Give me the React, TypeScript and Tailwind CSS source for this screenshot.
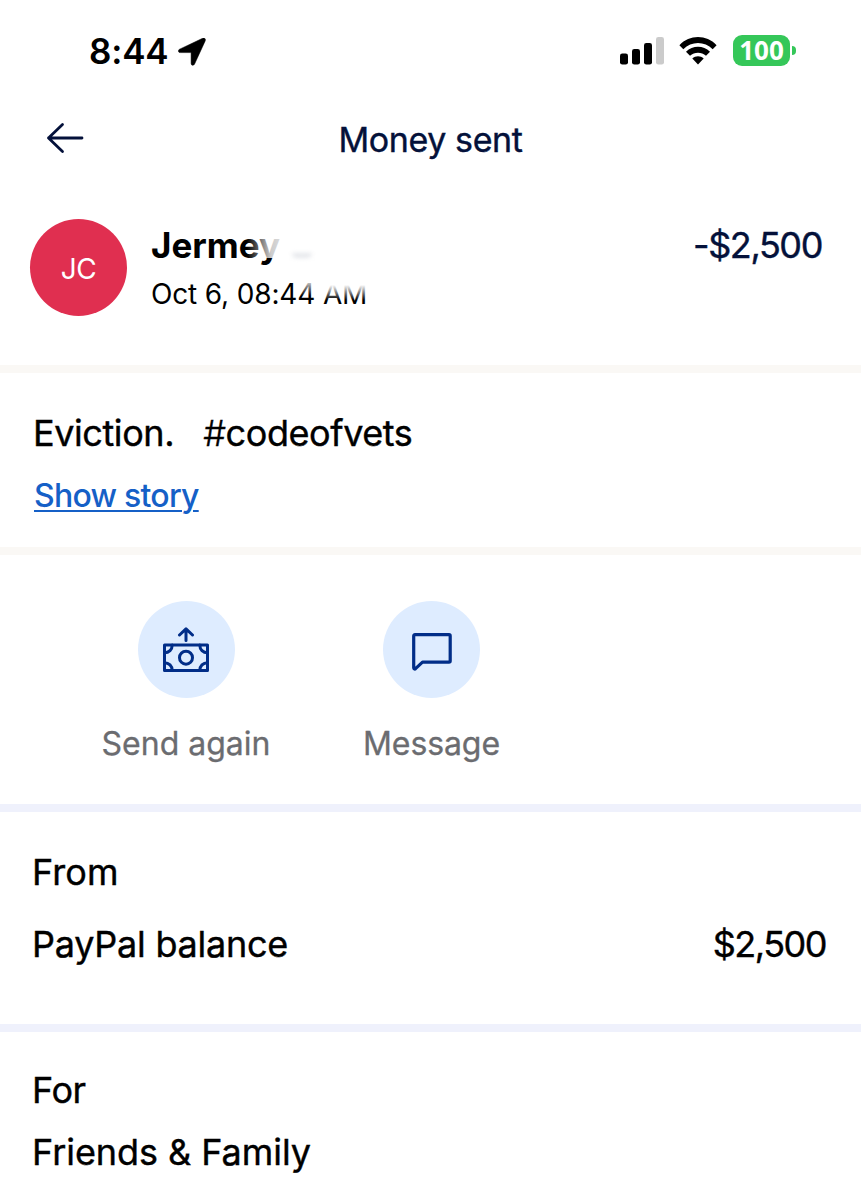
const ArrowLeft = () => (
    <svg width="38" height="32" viewBox="0 0 38 32" fill="none" stroke="#04113a" strokeWidth="2.8" strokeLinecap="round" strokeLinejoin="round">
      <path d="M16.5 2.5L2.5 16L16.5 29.5M2.5 16H36"/>
    </svg>
)

const LocationArrow = () => (
    <svg width="28" height="28" viewBox="0 0 28 28">
      <path d="M1.6 11.2L24.6 .3C26.6-.5 28 1 27.2 2.9L16.5 26.2C15.7 27.9 13.1 27.6 13.1 25.4V14.6H2.3C.1 14.6-.3 12 1.6 11.2Z" stroke="#000" strokeWidth=".5"/>
    </svg>
)

const Signal = () => (
    <svg width="44" height="28" viewBox="0 0 44 28">
      <rect x="0" y="16.5" width="8" height="11" rx="2.3"/>
      <rect x="12" y="12" width="8" height="15.5" rx="2.3"/>
      <rect x="24" y="6" width="8" height="21.5" rx="2.3"/>
      <rect x="36" y="0" width="8" height="27.5" rx="2.3" fill="#cbcbcb"/>
    </svg>
)

const Wifi = () => (
    <svg width="38" height="28" viewBox="0 0 38 28">
      <path d="M.4 8.2C10.6-2.7 27.4-2.7 37.6 8.2L33.7 12.2C25.6 3.9 12.4 3.9 4.3 12.2Z"/>
      <path d="M7 14.8C13.6 8.1 24.4 8.1 31 14.8L27 18.8C22.6 14.6 15.4 14.6 11 18.8Z"/>
      <path d="M13.3 21.5C16.5 18.6 21.5 18.6 24.7 21.5L19 27.5Z"/>
    </svg>
)

const SendAgain = () => (
    <svg width="46" height="46" viewBox="0 0 46 46" fill="none" stroke="#012d88" strokeWidth="3" strokeLinecap="round" strokeLinejoin="round">
      <path d="M23 13.5V2M16.5 8L23 1.8L29.5 8"/>
      <rect x="1.5" y="18" width="43" height="25.5"/>
      <circle cx="23" cy="30.7" r="6.5"/>
      <path d="M9.2 18C9.2 22.5 6 25.8 1.4 25.8M36.8 18C36.8 22.5 40 25.8 44.6 25.8M9.2 43.5C9.2 39 6 35.7 1.4 35.7M36.8 43.5C36.8 39 40 35.7 44.6 35.7"/>
    </svg>
)

const MessageBubble = () => (
    <svg width="40" height="38" viewBox="0 0 40 38" fill="none" stroke="#012d88" strokeWidth="3.2" strokeLinecap="round" strokeLinejoin="round">
      <path d="M3 1.7H37C37.7 1.7 38.2 2.2 38.2 2.9V28C38.2 28.7 37.7 29.2 37 29.2H10.5L3.5 35.7C2.7 36.4 1.7 35.8 1.7 34.8V2.9C1.7 2.2 2.3 1.7 3 1.7Z"/>
    </svg>
)

const App = () => {
  return (
      <div className="w-[861px] h-[1200px] overflow-hidden bg-white text-black font-['Inter',sans-serif] leading-[40px]">
        <div className="h-[102px] flex items-start justify-between pl-[89px] pr-[65px]">
          <div className="flex items-start">
            <span className="w-[89px] mt-[31px] text-[35px] font-semibold tracking-[-0.2px]">8:44</span>
            <div className="mt-[38px]"><LocationArrow/></div>
          </div>
          <div className="flex items-start">
            <div className="mt-[37px] mr-[15px]"><Signal/></div>
            <div className="mt-[37px] mr-[16px]"><Wifi/></div>
            <div className="mt-[35px] flex items-center">
              <div className="w-[57px] h-[31px] rounded-[9px] bg-[#35c759] text-white text-center text-[26px] leading-[31px] font-bold font-['Open_Sans',sans-serif]">100</div>
              <div className="ml-[2px] w-[4px] h-[9px] rounded-r-full bg-[#35c759]"></div>
            </div>
          </div>
        </div>

        <div className="h-[108px] grid grid-cols-[1fr_auto_1fr]">
          <div className="pl-[46px] pt-[20px]"><ArrowLeft/></div>
          <h1 className="pt-[18px] text-[34px] text-[#04113a] tracking-[-0.4px] [-webkit-text-stroke:0.4px]">Money sent</h1>
        </div>

        <div className="h-[155px] flex items-start pl-[30px] pr-[39px]">
          <div className="mt-[9px] w-[97px] h-[97px] rounded-full bg-[#e02f50] flex items-center justify-center text-white text-[28px] tracking-[-0.5px] pt-[3px]">JC</div>
          <div className="relative ml-[24px] mt-[15px] w-[280px]">
            <p className="text-[35px] font-bold">Jermey</p>
            <p className="mt-[9px] text-[28px] tracking-[-0.15px]">Oct 6, 08:44 AM</p>
            {/* soft mask over the surname and the end of the timestamp */}
            <div className="absolute left-[96px] top-[2px] w-[60px] h-[31px] bg-linear-to-r from-white/0 via-white/80 via-40% to-white"></div>
            <div className="absolute left-[141px] top-[28px] w-[20px] h-[5px] rounded-b-full bg-gray-200 blur-[2px]"></div>
            <div className="absolute left-[150px] top-[57px] w-[24px] h-[14px] bg-linear-to-b from-white/80 to-white/0"></div>
            <div className="absolute left-[174px] top-[55px] w-[50px] h-[20px] bg-linear-to-b from-white from-25% to-white/0"></div>
          </div>
          <p className="ml-auto mt-[15px] text-[36px] text-[#04113a] tracking-[-1.4px] [-webkit-text-stroke:0.4px]">-$2,500</p>
        </div>

        <div className="h-[182px] border-t-8 border-[#faf8f5] pl-[33px] pt-[40px]">
          <p className="text-[36px] whitespace-pre tracking-[-0.42px] [-webkit-text-stroke:0.4px]">Eviction.   <span className="font-light">#</span>codeofvets</p>
          <a className="block ml-[1px] mt-[23px] w-fit text-[32px] font-medium text-[#1560c7] tracking-[-0.75px] underline decoration-2 underline-offset-[3px]">Show story</a>
        </div>

        <div className="h-[257px] border-t-8 border-[#faf8f5] flex items-start pl-[63px] pt-[46px] text-[32px] text-[#6b6c70] [-webkit-text-stroke:0.3px]">
          <div className="w-[246px] flex flex-col items-center">
            <div className="w-[97px] h-[97px] rounded-full bg-[#deecff] flex items-center justify-center"><SendAgain/></div>
            <span className="mt-[26px]">Send again</span>
          </div>
          <div className="w-[245px] flex flex-col items-center">
            <div className="w-[97px] h-[97px] rounded-full bg-[#deecff] flex items-center justify-center pt-[5px]"><MessageBubble/></div>
            <span className="mt-[26px] tracking-[-0.1px]">Message</span>
          </div>
        </div>

        <div className="h-[220px] border-t-8 border-[#eff1fc] pl-[32px] pr-[35px] pt-[40px] text-[36px] [-webkit-text-stroke:0.4px]">
          <p className="tracking-[0.1px]">From</p>
          <div className="mt-[32px] flex justify-between">
            <span className="tracking-[-0.25px]">PayPal balance</span>
            <span className="tracking-[-1.5px]">$2,500</span>
          </div>
        </div>

        <div className="border-t-8 border-[#eff1fc] pl-[32px] pt-[38px] text-[36px] [-webkit-text-stroke:0.4px]">
          <p className="tracking-[-0.4px]">For</p>
          <p className="mt-[22px] tracking-[-0.05px]">Friends &amp; Family</p>
        </div>
      </div>
  )
}
export default App
